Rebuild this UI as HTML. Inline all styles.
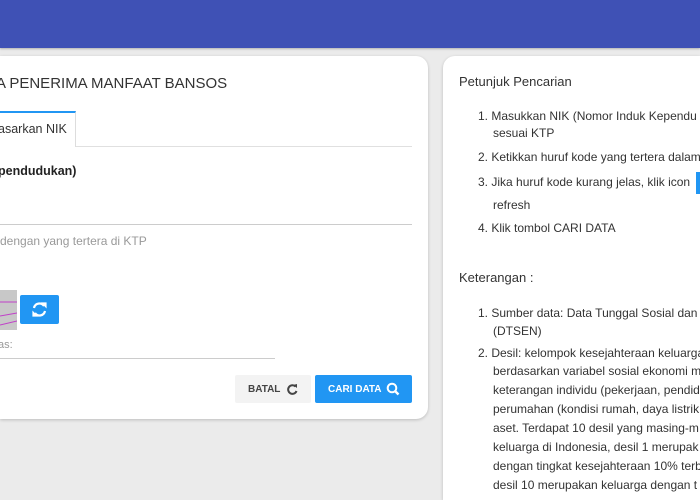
<!DOCTYPE html>
<html><head><meta charset="utf-8"><style>
*{margin:0;padding:0;box-sizing:border-box}
html,body{width:700px;height:500px;overflow:hidden}
body{background:#ebebeb;font-family:"Liberation Sans",sans-serif;position:relative;color:#333}
#w{position:absolute;left:0;top:0;width:700px;height:500px;overflow:hidden}
.hdr{position:absolute;left:0;top:0;width:700px;height:48px;background:#3f51b5;box-shadow:0 1px 2px rgba(0,0,0,.25)}
.card{position:absolute;background:#fff;border-radius:12px;box-shadow:0 1px 3px rgba(0,0,0,.2)}
.a{position:absolute;white-space:nowrap}
.r{font-size:12px;color:#333}
</style></head><body><div id="w">
<div class="hdr"></div>
<div class="card" style="left:0;top:56px;width:428px;height:363px;border-top-left-radius:0;border-bottom-left-radius:0"></div>
<div class="a" style="left:-4px;top:75px;font-size:15px;color:#333">A PENERIMA MANFAAT BANSOS</div>
<div class="a" style="left:0;top:111px;width:76px;height:36px;border-top:2px solid #2196f3;border-right:1px solid #ddd;background:#fff"></div>
<div class="a" style="left:76px;top:146px;width:336px;border-top:1px solid #e0e0e0"></div>
<div class="a" style="left:-2px;top:122px;font-size:12.5px">asarkan NIK</div>
<div class="a" style="left:-2px;top:164px;font-size:12.5px;font-weight:bold;color:#222">pendudukan)</div>
<div class="a" style="left:0;top:224px;width:412px;border-top:1px solid #ccc"></div>
<div class="a" style="left:0;top:234px;font-size:12px;color:#999">dengan yang tertera di KTP</div>
<div class="a" style="left:0;top:290px;width:17px;height:40px;background:#c8c8c8;overflow:hidden">
<svg width="17" height="40"><path d="M0 12 L17 12 M0 26 L17 23 M0 35 L17 31" stroke="#c040c8" stroke-width="1" fill="none"/></svg></div>
<div class="a" style="left:20px;top:295px;width:39px;height:29px;background:#2196f3;border-radius:2px">
<svg width="39" height="29" viewBox="0 0 39 29"><g fill="none" stroke="#fff" stroke-width="2.2"><path d="M14 13 A5.5 5.5 0 0 1 24 11"/><path d="M25 16 A5.5 5.5 0 0 1 15 18"/></g><path d="M22 8 L26 8 L26 12 Z M17 21 L13 21 L13 17 Z" fill="#fff" stroke="#fff" stroke-width="1.2"/></svg></div>
<div class="a" style="left:-2px;top:339px;font-size:11px;color:#999">as:</div>
<div class="a" style="left:0;top:358px;width:275px;border-top:1px solid #ccc"></div>
<div class="a" style="left:235px;top:375px;width:76px;height:28px;background:#f3f3f3;border-radius:2px">
<span class="a" style="left:13px;top:9px;font-size:10px;font-weight:bold;color:#444">BATAL</span>
<svg class="a" style="left:51px;top:8px" width="13" height="13" viewBox="0 0 13 13"><path d="M9.5 3.5 A4.3 4.3 0 1 0 10.5 8" fill="none" stroke="#444" stroke-width="2"/><path d="M7 2 L11 1 L11 5 Z" fill="#444"/></svg></div>
<div class="a" style="left:315px;top:375px;width:97px;height:28px;background:#2196f3;border-radius:2px">
<span class="a" style="left:13px;top:9px;font-size:10px;font-weight:bold;color:#fff">CARI DATA</span>
<svg class="a" style="left:71px;top:7px" width="14" height="14" viewBox="0 0 14 14"><circle cx="6" cy="6" r="4.3" fill="none" stroke="#fff" stroke-width="2"/><path d="M9 9 L12.5 12.5" stroke="#fff" stroke-width="2.4"/></svg></div>

<div class="card" style="left:443px;top:56px;width:257px;height:444px;border-top-right-radius:0;border-bottom-right-radius:0;border-bottom-left-radius:0"></div>
<div class="a" style="left:459px;top:74px;font-size:13px;color:#333">Petunjuk Pencarian</div>
<div class="a r" style="left:478px;top:109px">1. Masukkan NIK (Nomor Induk Kependu</div>
<div class="a r" style="left:493px;top:126px">sesuai KTP</div>
<div class="a r" style="left:478px;top:150px">2. Ketikkan huruf kode yang tertera dalam</div>
<div class="a r" style="left:478px;top:175px">3. Jika huruf kode kurang jelas, klik icon</div>
<div class="a" style="left:696px;top:172px;width:4px;height:22px;background:#2196f3"></div>
<div class="a r" style="left:493px;top:198px">refresh</div>
<div class="a r" style="left:478px;top:221px">4. Klik tombol CARI DATA</div>
<div class="a" style="left:459px;top:270px;font-size:13px;color:#333">Keterangan :</div>
<div class="a r" style="left:478px;top:306px">1. Sumber data: Data Tunggal Sosial dan</div>
<div class="a r" style="left:493px;top:324px">(DTSEN)</div>
<div class="a r" style="left:478px;top:346px">2. Desil: kelompok kesejahteraan keluarga</div>
<div class="a r" style="left:493px;top:364px">berdasarkan variabel sosial ekonomi m</div>
<div class="a r" style="left:493px;top:383px">keterangan individu (pekerjaan, pendid</div>
<div class="a r" style="left:493px;top:402px">perumahan (kondisi rumah, daya listrik</div>
<div class="a r" style="left:493px;top:421px">aset. Terdapat 10 desil yang masing-m</div>
<div class="a r" style="left:493px;top:440px">keluarga di Indonesia, desil 1 merupak</div>
<div class="a r" style="left:493px;top:459px">dengan tingkat kesejahteraan 10% terb</div>
<div class="a r" style="left:493px;top:478px">desil 10 merupakan keluarga dengan t</div>
</div></body></html>
